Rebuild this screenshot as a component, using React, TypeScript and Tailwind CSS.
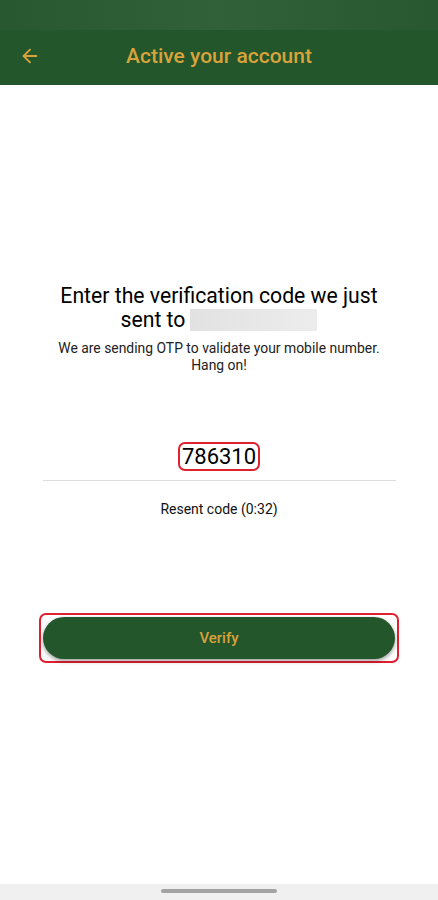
import { ArrowLeft } from "lucide-react";

export default function App() {
	return (
		<div className="flex h-[900px] w-[438px] flex-col bg-white font-['Roboto',sans-serif]">
			<div className="h-[30px] shrink-0 bg-gradient-to-r from-[#27582f] via-[#316138] to-[#27582f]" />
			<header className="relative flex h-[55px] shrink-0 items-center justify-center bg-[#23562b] pb-[1px]">
				<button type="button" className="absolute left-[19px] top-[15px] text-[#d9a23b]" aria-label="Back">
					<ArrowLeft size={22} strokeWidth={2} />
				</button>
				<h1 className="text-[21px] font-medium text-[#d9a23b]">Active your account</h1>
			</header>

			<main className="flex flex-1 flex-col items-center">
				<div className="mt-[199px] flex flex-col items-center text-center">
					<p className="text-[21.2px] leading-[24px] text-black">Enter the verification code we just</p>
					<p className="flex items-center text-[21.2px] leading-[24px] text-black">
						sent to
						<span className="ml-[5px] inline-block h-[22px] w-[127px] bg-gradient-to-r from-[#e2e2e2] to-[#ececec]" />
					</p>
					<p className="mt-[8px] text-[13.9px] leading-[17px] text-[#222]">
						We are sending OTP to validate your mobile number.
						<br />
						Hang on!
					</p>
				</div>

				<div className="mt-[68px] flex w-[353px] flex-col items-center border-b border-[#dcdcdc] pb-[9px]">
					<span className="rounded-[7px] border-2 border-[#e0202e] px-[2px] text-[22px] leading-[25px] text-black">
						786310
					</span>
				</div>

				<p className="mt-[18px] text-[14px] text-[#111]">Resent code (0:32)</p>

				<div className="mt-[93px] rounded-[7px] border-2 border-[#e0202e] p-[2px]">
					<button
						type="button"
						className="flex h-[42px] w-[352px] items-center justify-center rounded-full bg-[#23562b] text-[15px] font-medium text-[#d9a23b] shadow-[0_2px_4px_rgba(0,0,0,0.4)]"
					>
						Verify
					</button>
				</div>
			</main>

			<div className="flex h-[16px] shrink-0 items-start justify-center bg-[#f0f0f0] pt-[5px]">
				<div className="h-[4px] w-[116px] rounded-full bg-[#a3a3a3]" />
			</div>
		</div>
	);
}
